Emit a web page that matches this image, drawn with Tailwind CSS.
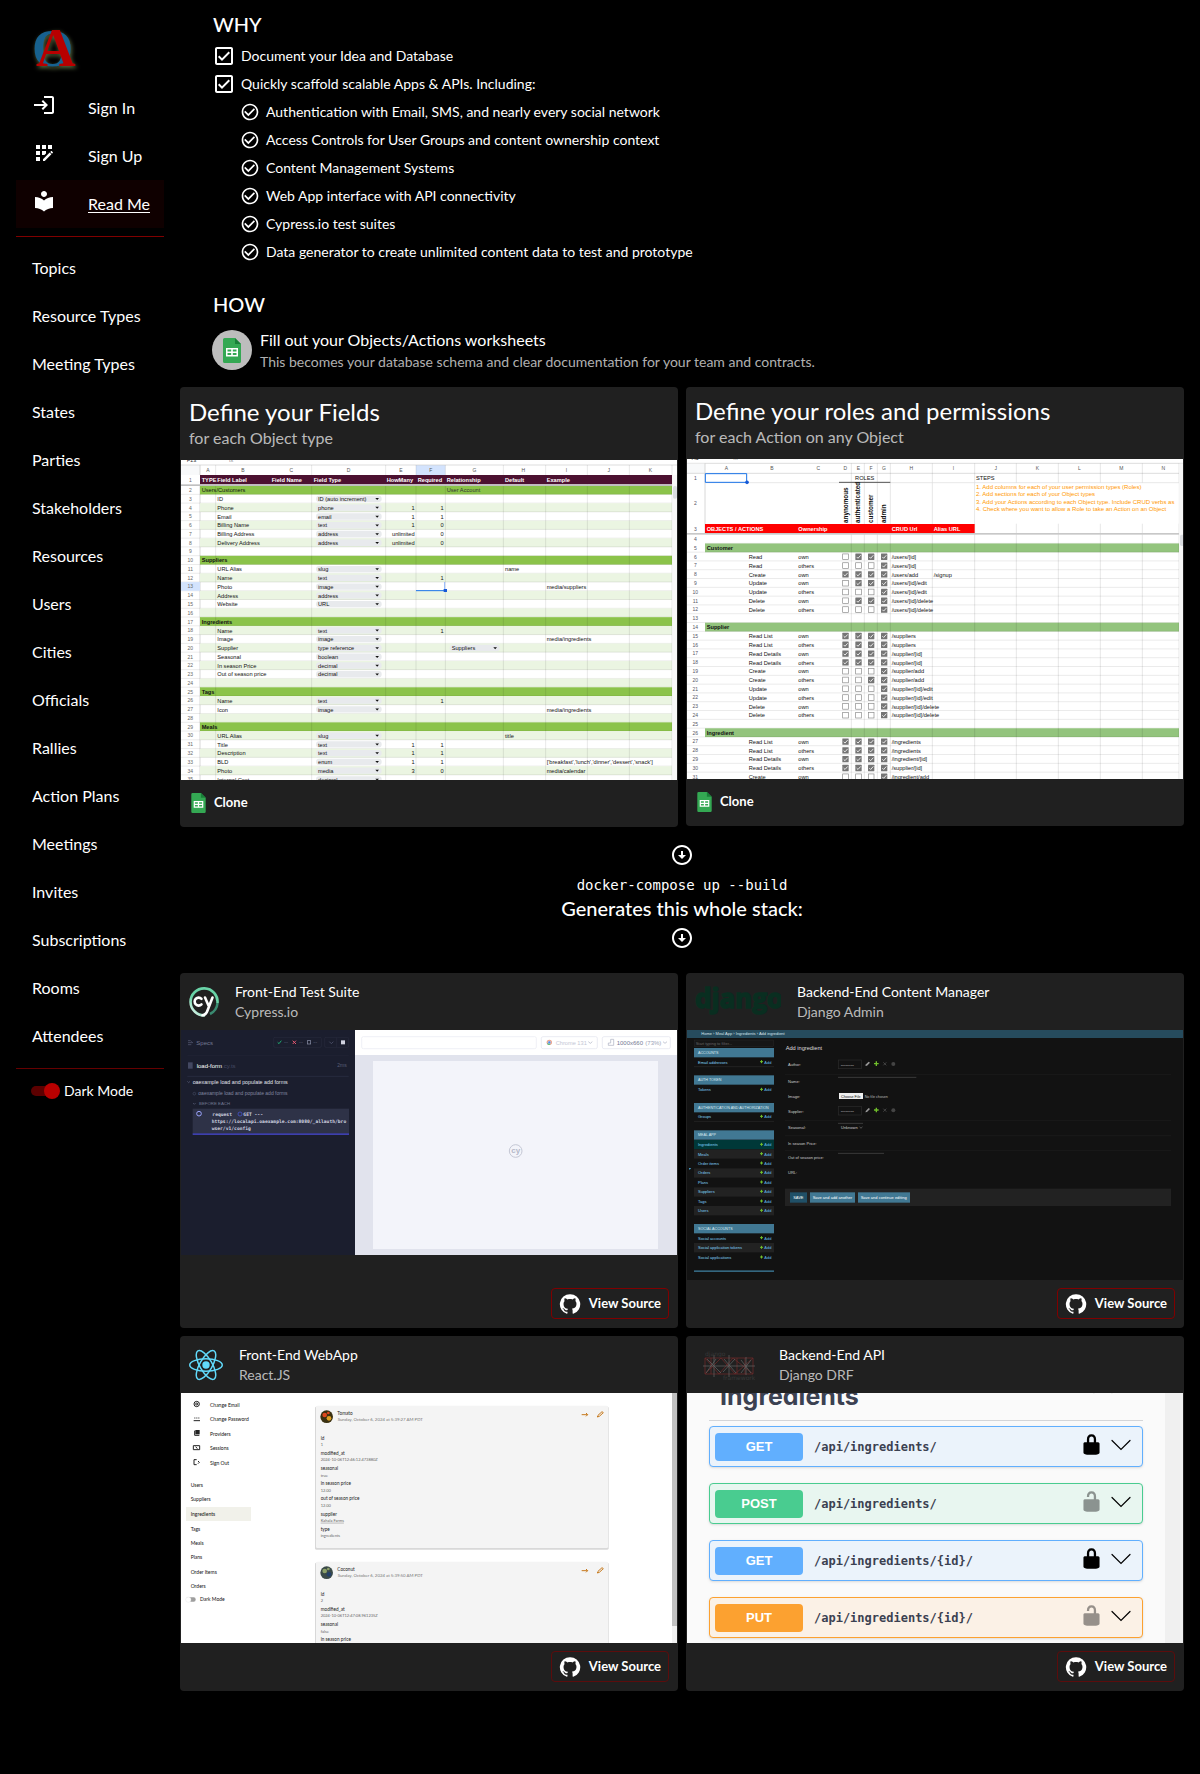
<!DOCTYPE html>
<html lang="en">
<head>
<meta charset="utf-8">
<meta name="viewport" content="width=device-width, initial-scale=1">
<title>Read Me</title>
<script src="https://cdn.jsdelivr.net/npm/@tailwindcss/browser@4"></script>
</head>
<body class="min-h-screen bg-black font-[Lato,sans-serif] text-white">
<svg class="hidden" aria-hidden="true">
  <symbol id="login" viewBox="0 0 24 24"><path d="M11 7 9.6 8.4l2.6 2.6H2v2h10.2l-2.6 2.6L11 17l5-5-5-5zm9 12h-8v2h8c1.1 0 2-.9 2-2V5c0-1.1-.9-2-2-2h-8v2h8v14z"/></symbol>
  <symbol id="register" viewBox="0 0 24 24"><path d="M10 4h4v4h-4zM4 16h4v4H4zM4 10h4v4H4zM4 4h4v4H4zM14 12.42V10h-4v4h2.42zM20.88 11.29l-1.17-1.17c-.16-.16-.42-.16-.58 0l-.88.88L20 12.75l.88-.88c.16-.16.16-.42 0-.58zM11 18.25V20h1.75l6.67-6.67-1.75-1.75zM16 4h4v4h-4z"/></symbol>
  <symbol id="library" viewBox="0 0 24 24"><path d="M12 11.55C9.64 9.35 6.48 8 3 8v11c3.48 0 6.64 1.35 9 3.55 2.36-2.19 5.52-3.55 9-3.55V8c-3.48 0-6.64 1.35-9 3.55zM12 8c1.66 0 3-1.34 3-3s-1.34-3-3-3-3 1.34-3 3 1.34 3 3 3z"/></symbol>
  <symbol id="box" viewBox="0 0 24 24"><path d="M19 3H5c-1.1 0-2 .9-2 2v14c0 1.1.9 2 2 2h14c1.1 0 2-.9 2-2V5c0-1.1-.9-2-2-2m0 16H5V5h14zM17.99 9l-1.41-1.42-6.59 6.59-2.58-2.57-1.42 1.41 4 3.99z"/></symbol>
  <symbol id="tick" viewBox="0 0 24 24"><path d="M16.59 7.58 10 14.17l-3.59-3.58L5 12l5 5 8-8zM12 2C6.48 2 2 6.48 2 12s4.48 10 10 10 10-4.48 10-10S17.52 2 12 2m0 18c-4.42 0-8-3.58-8-8s3.58-8 8-8 8 3.58 8 8-3.58 8-8 8"/></symbol>
  <symbol id="down" viewBox="0 0 24 24"><path d="M12 4c4.41 0 8 3.59 8 8s-3.59 8-8 8-8-3.59-8-8 3.59-8 8-8m0-2C6.48 2 2 6.48 2 12s4.48 10 10 10 10-4.48 10-10S17.52 2 12 2m1 10V8h-2v4H8l4 4 4-4z"/></symbol>
  <symbol id="github" viewBox="0 0 24 24"><path d="M12 1.27a11 11 0 00-3.48 21.46c.55.09.73-.28.73-.55v-1.84c-3.03.64-3.67-1.46-3.67-1.46-.55-1.29-1.28-1.65-1.28-1.65-.92-.65.1-.65.1-.65 1.1 0 1.73 1.1 1.73 1.1.92 1.65 2.57 1.2 3.21.92a2 2 0 01.64-1.47c-2.47-.27-5.04-1.19-5.04-5.5 0-1.1.46-2.1 1.2-2.84a3.76 3.76 0 010-2.93s.91-.28 3.11 1.1c1.8-.49 3.7-.49 5.5 0 2.1-1.38 3.02-1.1 3.02-1.1a3.76 3.76 0 01.1 2.93c.83.74 1.2 1.74 1.2 2.94 0 4.21-2.57 5.13-5.04 5.4.45.37.82.92.82 2.02v3.03c0 .27.1.64.73.55A11 11 0 0012 1.27"/></symbol>
  <symbol id="sheets" viewBox="0 0 18 25"><path fill="#34a853" d="M1.6 0H12l6 6v17.4a1.6 1.6 0 0 1-1.6 1.6H1.6A1.6 1.6 0 0 1 0 23.400V1.600A1.600 1.600 0 0 1 1.600 0z"/><path fill="#188038" d="M12 0l6 6h-6z"/><path fill="#fff" fill-rule="evenodd" d="M3 10h12v8.500H3zM4.500 11.500v2h3.700v-2zm5.300 0v2h3.700v-2zm-5.300 3.500v2h3.700v-2zm5.300 0v2h3.700v-2z"/></symbol>
  <symbol id="lock" viewBox="0 0 20 20"><path d="M15.800 8H14V5.600C14 2.703 12.665 1 10 1 7.334 1 6 2.703 6 5.600V8H4c-.553 0-1 .646-1 1.199V17c0 .549.428 1.139.951 1.307l1.197.387C5.672 18.861 6.550 19 7.100 19h5.800c.549 0 1.428-.139 1.951-.307l1.196-.387c.524-.167.953-.757.953-1.306V9.199C17 8.646 16.352 8 15.800 8zM12 8H8V5.199C8 3.754 8.797 3 10 3c1.203 0 2 .754 2 2.199V8z"/></symbol>
  <symbol id="unlock" viewBox="0 0 20 20"><path d="M15.800 8H14V5.600C14 2.703 12.665 1 10 1 7.334 1 6 2.703 6 5.600V6h2v-.801C8 3.754 8.797 3 10 3c1.203 0 2 .754 2 2.199V8H4c-.553 0-1 .646-1 1.199V17c0 .549.428 1.139.951 1.307l1.197.387C5.672 18.861 6.550 19 7.100 19h5.800c.549 0 1.428-.139 1.951-.307l1.196-.387c.524-.167.953-.757.953-1.306V9.199C17 8.646 16.352 8 15.800 8z"/></symbol>
  <symbol id="chevron" viewBox="0 0 20 20"><path fill="none" stroke="currentColor" stroke-width="1.200" stroke-linecap="round" d="M1 5.500l9 9 9-9"/></symbol>
</svg>

<div class="flex items-start px-4">
  <nav class="w-[148px] shrink-0 text-base leading-6" aria-label="Main">
    <a href="#" class="flex h-[84px] items-center pl-4 pt-3" aria-label="Home">
      <svg class="h-12 w-12 overflow-visible drop-shadow-[1px_2px_2px_#5a6a40]" viewBox="0 0 48 48" font-family="Liberation Serif, serif" font-weight="700" font-size="55"><text x="0" y="42" fill="#17618f" font-size="53">O</text><text x="4" y="42" fill="#b80000">A</text></svg>
    </a>
    <a href="#" class="flex h-12 items-center px-4"><svg class="mb-1.5 mr-8 size-6 shrink-0 fill-white"><use href="#login"/></svg>Sign In</a>
    <a href="#" class="flex h-12 items-center px-4"><svg class="mb-1.5 mr-8 size-6 shrink-0 fill-white"><use href="#register"/></svg>Sign Up</a>
    <a href="#" class="flex h-12 items-center bg-[#0f0000] pl-4 underline underline-offset-2"><svg class="mb-1.5 mr-8 size-6 shrink-0 fill-white"><use href="#library"/></svg><span class="whitespace-nowrap">Read Me</span></a>
    <hr class="my-2 border-[#800000]">
    <div id="links" class="-mt-px flex flex-col"></div>
    <hr class="my-2 border-[#650000]">
    <label class="flex h-7 items-center gap-1 pl-[15px] text-sm whitespace-nowrap">
      <span class="relative flex h-4 w-[29px] items-center">
        <input type="checkbox" role="switch" checked class="peer absolute inset-0 size-full cursor-pointer appearance-none">
        <span class="pointer-events-none h-2.5 w-7 rounded-full bg-[#5c0000]"></span>
        <span class="pointer-events-none absolute right-0 size-4 rounded-full bg-[#b80000]"></span>
      </span>Dark Mode
    </label>
  </nav>

  <main class="min-w-0 flex-1 pl-4">
    <section class="pl-8 pt-2">
      <h2 class="mb-0.5 pl-px text-xl leading-8 font-medium">WHY</h2>
      <ul id="why" class="text-sm"></ul>
      <h2 class="mt-[22px] pl-px text-xl leading-8 font-medium">HOW</h2>
      <div class="mt-2 flex items-center gap-2 pb-[15px]">
        <span class="grid size-10 shrink-0 place-items-center rounded-full bg-[#bdbdbd]"><svg class="h-[25px] w-[18px]"><use href="#sheets"/></svg></span>
        <div>
          <p class="text-base leading-6">Fill out your Objects/Actions worksheets</p>
          <p class="text-sm leading-5 text-white/70">This becomes your database schema and clear documentation for your team and contracts.</p>
        </div>
      </div>
    </section>

    <section class="grid grid-cols-2 items-start gap-2">
      <article class="rounded bg-[#202020] p-px">
        <header class="px-2 pt-2 pb-3"><h3 class="text-2xl leading-8">Define your Fields</h3><p class="text-base leading-5 text-white/70">for each Object type</p></header>
        <svg id="fields" class="block h-80 w-full bg-white" viewBox="3 30 1488 960" preserveAspectRatio="xMidYMin slice" role="img" aria-label="Fields worksheet" font-family="Liberation Sans, sans-serif" font-size="17"></svg>
        <footer class="flex h-[46px] items-center"><a href="#" class="flex items-center gap-2 pl-2.5 text-[13px] font-bold"><svg class="h-5 w-[15px]"><use href="#sheets"/></svg>Clone</a></footer>
      </article>
      <article class="rounded bg-[#202020] p-px">
        <header class="px-2 pt-[7px] pb-3"><h3 class="text-2xl leading-8">Define your roles and permissions</h3><p class="text-base leading-5 text-white/70">for each Action on any Object</p></header>
        <svg id="roles" class="block h-80 w-full bg-white" viewBox="21 237 1488 960" preserveAspectRatio="xMidYMin slice" role="img" aria-label="Roles and permissions worksheet" font-family="Liberation Sans, sans-serif" font-size="17"></svg>
        <footer class="flex h-[46px] items-center"><a href="#" class="flex items-center gap-2 pl-2.5 text-[13px] font-bold"><svg class="h-5 w-[15px]"><use href="#sheets"/></svg>Clone</a></footer>
      </article>
    </section>

    <section class="flex flex-col items-center pt-4 pb-[23px]">
      <svg class="size-6 fill-white"><use href="#down"/></svg>
      <code class="mt-2 font-['DejaVu_Sans_Mono',monospace] text-sm leading-5">docker-compose up --build</code>
      <h2 class="text-xl leading-[26px] font-medium">Generates this whole stack:</h2>
      <svg class="mt-[5px] size-6 fill-white"><use href="#down"/></svg>
    </section>

    <section class="grid grid-cols-2 gap-2">
      <article class="rounded bg-[#202020] p-px">
        <header class="flex h-14 items-center pl-2">
          <svg class="mr-4 size-[30px]" viewBox="0 0 30 30" aria-hidden="true"><defs><linearGradient id="cyg" x1="0" y1="1" x2="1" y2="0"><stop offset="0" stop-color="#fff"/><stop offset=".35" stop-color="#69d3a7"/><stop offset="1" stop-color="#69d3a7"/></linearGradient></defs><path fill="none" stroke="url(#cyg)" stroke-width="2.600" d="M16 28.300A13.500 13.500 0 1 1 28.500 16"/><path fill="none" stroke="#3a8a70" stroke-width="2.600" d="M28.500 16a13.500 13.500 0 0 1-7.500 11"/><path fill="none" stroke="#fff" stroke-width="2.600" stroke-linecap="round" d="M12.500 11.800a4 4 0 1 0 0 5.600M16 10.500l3.500 8M23.500 10.500l-5 13q-1.500 4.500-5 4.800"/></svg>
          <div class="text-sm leading-5"><h3>Front-End Test Suite</h3><p class="text-white/70">Cypress.io</p></div>
        </header>
        <svg id="cypress" class="block h-[250px] w-full" viewBox="3 60 1488 750" preserveAspectRatio="xMidYMin slice" role="img" aria-label="Cypress test runner" font-family="Liberation Sans, sans-serif" font-size="18"></svg>
        <footer class="flex h-[47px] items-center justify-end pr-2"><a href="#" class="flex h-[31px] items-center gap-2 rounded border border-[#800000] px-[7px] text-[13px] font-bold whitespace-nowrap"><svg class="size-[22px] fill-white"><use href="#github"/></svg>View Source</a></footer>
      </article>
      <article class="rounded bg-[#202020] p-px">
        <header class="flex h-14 items-center pl-2">
          <svg class="mr-4 h-8 w-[86px]" viewBox="0 0 86 32" role="img" aria-label="django"><text x="0" y="22" fill="#092e20" stroke="#092e20" stroke-width="1.500" font-family="Open Sans, sans-serif" font-weight="700" font-size="26">django</text></svg>
          <div class="text-sm leading-5"><h3>Backend-End Content Manager</h3><p class="text-white/70">Django Admin</p></div>
        </header>
        <svg id="admin" class="block h-[250px] w-full bg-[#121212]" viewBox="9 180 1488 750" preserveAspectRatio="xMidYMin slice" role="img" aria-label="Django admin form" font-family="Liberation Sans, sans-serif" font-size="15"></svg>
        <footer class="flex h-[47px] items-center justify-end pr-2"><a href="#" class="flex h-[31px] items-center gap-2 rounded border border-[#800000] px-[7px] text-[13px] font-bold whitespace-nowrap"><svg class="size-[22px] fill-white"><use href="#github"/></svg>View Source</a></footer>
      </article>
      <article class="rounded bg-[#202020] p-px">
        <header class="flex h-14 items-center pl-2">
          <svg class="mr-4 h-8 w-[34px]" viewBox="-11.500 -10.500 23 21" fill="none" stroke="#61dafb" aria-hidden="true"><circle r="2" fill="#61dafb"/><ellipse rx="11" ry="4.200"/><ellipse rx="11" ry="4.200" transform="rotate(60)"/><ellipse rx="11" ry="4.200" transform="rotate(120)"/></svg>
          <div class="text-sm leading-5"><h3>Front-End WebApp</h3><p class="text-white/70">React.JS</p></div>
        </header>
        <svg id="webapp" class="block h-[250px] w-full bg-white" viewBox="3 189 1488 750" preserveAspectRatio="xMidYMin slice" role="img" aria-label="React web app" font-family="Lato, sans-serif" font-size="17"></svg>
        <footer class="flex h-[47px] items-center justify-end pr-2"><a href="#" class="flex h-[31px] items-center gap-2 rounded border border-[#5c0c0c] px-[7px] text-[13px] font-bold whitespace-nowrap"><svg class="size-[22px] fill-white"><use href="#github"/></svg>View Source</a></footer>
      </article>
      <article class="rounded bg-[#202020] p-px">
        <header class="flex h-14 items-center pl-4">
          <svg class="mr-6 h-8 w-[52px]" viewBox="0 0 52 32" aria-hidden="true"><g fill="none" stroke="#6b2a2a" stroke-width=".8"><path d="M2 9h48v16H2zM2 9l14 16L30 9l20 16M2 25L18 9l14 16L50 9M8 9v16M34 9v16M42 9v16"/></g><g fill="none" stroke="#666" stroke-width=".7"><path d="M0 17h52M11 6v22M26 6v22M43 8v18M3 24L13 10M4 10l14 14M20 23l12-13M21 10l12 14M38 11l10 13M48 11L38 24"/></g><g fill="#383838" font-family="DejaVu Sans, sans-serif" font-size="6"><text x="2" y="7">django</text><text x="20" y="31">framework</text></g></svg>
          <div class="text-sm leading-5"><h3>Backend-End API</h3><p class="text-white/70">Django DRF</p></div>
        </header>
        <div class="flex h-[250px] overflow-hidden bg-[#fafafa] text-[#3b4151]">
          <div class="flex min-w-0 flex-1 flex-col px-[22px]">
            <div class="mb-[5px] flex h-7 shrink-0 items-end justify-between border-b border-[#3b4151]/20 pr-[30px] pb-2 pl-[11px]">
              <span class="font-[Inter,sans-serif] text-[25px] leading-8 font-bold">Ingredients</span>
              <svg class="mb-3.5 size-5 rotate-180 text-black"><use href="#chevron"/></svg>
            </div>
            <div id="api" class="flex flex-col gap-4"></div>
          </div>
          <div class="w-[18px] bg-[#f0f0f0]"></div>
        </div>
        <footer class="flex h-[47px] items-center justify-end pr-2"><a href="#" class="flex h-[31px] items-center gap-2 rounded border border-[#5c0c0c] px-[7px] text-[13px] font-bold whitespace-nowrap"><svg class="size-[22px] fill-white"><use href="#github"/></svg>View Source</a></footer>
      </article>
    </section>
  </main>
</div>

<script>
const $ = id => document.getElementById(id);
const esc = s => String(s).replace(/&/g, '&amp;').replace(/</g, '&lt;');
const R = (x, y, w, h, f, more = '') => `<rect x="${x}" y="${y}" width="${w}" height="${h}" fill="${f}" ${more}/>`;
const T = (x, y, s, f = '#111', more = '') => `<text x="${x}" y="${y}" fill="${f}" ${more}>${esc(s)}</text>`;
const L = (x1, y1, x2, y2, c, w = 2) => `<path d="M${x1} ${y1}L${x2} ${y2}" stroke="${c}" stroke-width="${w}" fill="none"/>`;
const B = 'font-weight="700"', MID = 'text-anchor="middle"', END = 'text-anchor="end"';

// Sidebar links
$('links').innerHTML = ['Topics','Resource Types','Meeting Types','States','Parties','Stakeholders','Resources','Users','Cities','Officials','Rallies','Action Plans','Meetings','Invites','Subscriptions','Rooms','Attendees']
  .map(t => `<a href="#" class="flex h-12 items-center px-4 whitespace-nowrap">${t}</a>`).join('');

// Feature list
const row = (icon, cls, t) => `<li class="flex h-7 items-center ${cls}"><svg class="${icon === 'box' ? 'size-6' : 'size-5'} shrink-0 fill-white"><use href="#${icon}"/></svg>${esc(t)}</li>`;
$('why').innerHTML = ['Document your Idea and Database', 'Quickly scaffold scalable Apps & APIs. Including:'].map(t => row('box', 'gap-[5px]', t)).join('') +
  ['Authentication with Email, SMS, and nearly every social network','Access Controls for User Groups and content ownership context','Content Management Systems','Web App interface with API connectivity','Cypress.io test suites','Data generator to create unlimited content data to test and prototype'].map(t => row('tick', 'gap-1.5 pl-7', t)).join('');

// API operations
const tones = {
  GET: ['border-[#61affe] bg-[#ebf3fb]', 'bg-[#61affe]'],
  POST: ['border-[#49cc90] bg-[#e8f6f0]', 'bg-[#49cc90]'],
  PUT: ['border-[#fca130] bg-[#fbf1e6]', 'bg-[#fca130]'],
};
$('api').innerHTML = [['GET','/api/ingredients/',1],['POST','/api/ingredients/',0],['GET','/api/ingredients/{id}/',1],['PUT','/api/ingredients/{id}/',0]].map(([m, p, locked]) =>
  `<div class="flex h-[41px] items-center rounded border px-[5px] shadow-sm ${tones[m][0]}"><span class="grid h-7 w-[88px] place-items-center rounded-sm font-['Liberation_Sans',sans-serif] text-[13px] font-bold text-white ${tones[m][1]}">${m}</span><span class="ml-[11px] flex-1 font-['DejaVu_Sans_Mono',monospace] text-xs font-bold">${p}</span><svg class="mr-2 mb-1 size-[23px] ${locked ? 'fill-black' : 'fill-black/40'}"><use href="#${locked ? 'lock' : 'unlock'}"/></svg><svg class="mr-1.5 mb-1 size-5 text-black"><use href="#chevron"/></svg></div>`).join('');

// Fields worksheet
(() => {
  let s = '';
  const top = n => 107 + (n - 2) * 26.3;
  const heads = {2:'Users/Customers',10:'Suppliers',17:'Ingredients',25:'Tags',29:'Meals'};
  const cols = [107,395,617,708,796,970,1097,1222,1348,1476];
  s += T(20, 36, 'F13', '#333') + T(147, 37, 'fx', '#888');
  s += R(3, 45, 57, 30, '#f8f9fa') + R(708, 45, 88, 30, '#d3e3fd') + L(3, 45, 1491, 45, '#ccc') + L(60, 45, 60, 990, '#c4c4c4');
  [[84,'A'],[189,'B'],[334,'C'],[506,'D'],[663,'E'],[752,'F'],[883,'G'],[1030,'H'],[1159,'I'],[1286,'J'],[1411,'K']].forEach(([x, t]) => s += T(x, 66, t, '#555', MID + ' font-size="15"'));
  for (let n = 2; n <= 35; n++) {
    const y = top(n);
    if (heads[n]) s += R(60, y, 1416, 26.3, '#8bc34a') + T(65, y + 20, heads[n], '#111', n === 2 ? '' : B);
    else if (n % 2 === 0) s += R(60, y, 1416, 26.3, '#ebf5e2');
    s += L(3, y + 26, 1476, y + 26, '#000" stroke-opacity=".13', 2);
    s += n === 13 ? R(3, y, 57, 26, '#d3e3fd') : '';
    s += T(31, y + 19, n, '#666', MID + ' font-size="15"');
  }
  cols.forEach(x => s += L(x, 45, x, 990, '#000" stroke-opacity=".14', 2));
  s += R(3, 75, 57, 28, '#fff') + T(31, 96, 1, '#666', MID + ' font-size="15"') + R(60, 75, 1416, 28, '#4c1130') + R(3, 103, 1473, 5, '#c0c0c0');
  [[65,'TYPE'],[112,'Field Label'],[275,'Field Name'],[401,'Field Type'],[620,'HowMany'],[713,'Required'],[800,'Relationship'],[975,'Default'],[1100,'Example']].forEach(([x, t]) => s += T(x, 96, t, '#fff', B));
  s += T(800, 127, 'User Account', '#333');
  const rows = {
    3:['ID','ID (auto increment)'],4:['Phone','phone',1,1],5:['Email','email',1,1],6:['Billing Name','text',1,0],7:['Billing Address','address','unlimited',0],8:['Delivery Address','address','unlimited',0],
    11:['URL Alias','slug','','','name'],12:['Name','text','',1],13:['Photo','image','','','','media/suppliers'],14:['Address','address'],15:['Website','URL'],
    18:['Name','text','',1],19:['Image','image','','','','media/ingredients'],20:['Supplier','type reference'],21:['Seasonal','boolean'],22:['In season Price','decimal'],23:['Out of season price','decimal'],
    26:['Name','text','',1],27:['Icon','image','','','','media/ingredients'],
    30:['URL Alias','slug','','','title'],31:['Title','text',1,1],32:['Description','text',1,1],33:['BLD','enum',1,1,'',"['breakfast','lunch','dinner','dessert','snack']"],34:['Photo','media',3,0,'','media/calendar'],35:['Internal Cost','decimal']
  };
  const chip = (x, y, w, t) => R(x, y + 4, w, 19, '#e8eaed', 'rx="9"') + T(x + 6, y + 20, t) + `<path d="M${x + w - 19} ${y + 11}h11l-5.500 6z" fill="#111"/>`;
  for (const n in rows) {
    const y = top(+n), [a, b, c = '', d = '', e = '', f = ''] = rows[n];
    s += T(112, y + 20, a) + chip(408, y, 197, b) + T(704, y + 20, c, '#111', END) + T(791, y + 20, d, '#111', END) + T(975, y + 20, e) + T(1100, y + 20, f);
  }
  s += chip(809, top(20), 150, 'Suppliers');
  s += L(708, 422, 796, 422, '#1a73e8', 3) + L(794, 396, 794, 422, '#8ab4f8', 3) + R(791, 417, 10, 9, '#1558d6');
  s += R(1478, 75, 13, 915, '#f8f8f8') + R(1479, 108, 12, 38, '#dadce0', 'rx="5"');
  $('fields').innerHTML = s;
})();

// Roles and permissions worksheet
(() => {
  let s = '';
  const top = n => 464 + (n - 4) * 26.4;
  const heads = {5:'Customer',14:'Supplier',26:'Ingredient'};
  s += T(35, 241, 'A1', '#333') + T(160, 241, 'fx', '#888') + L(21, 250, 1509, 250, '#ccc') + R(21, 251, 54, 29, '#f8f9fa') + L(75, 250, 75, 459, '#c4c4c4') + L(21, 280, 1497, 280, '#ccc');
  [[139,'A'],[276,'B'],[415,'C'],[496,'D'],[535,'E'],[573,'F'],[612,'G'],[694,'H'],[820,'I'],[947,'J'],[1072,'K'],[1198,'L'],[1324,'M'],[1450,'N']].forEach(([x, t]) => s += T(x, 270, t, '#555', MID + ' font-size="15"'));
  for (let n = 4; n <= 31; n++) {
    const y = top(n);
    if (heads[n]) s += R(75, y, 1422, 26.4, '#93c47d') + T(80, y + 20, heads[n], '#111', B);
    s += L(n === 4 ? 75 : 21, y + 26, 1497, y + 26, '#000" stroke-opacity=".13') + T(46, y + 19, n, '#556', MID + ' font-size="15"');
  }
  [514,553,592,631,757,884,1009,1135,1261,1387,1497].forEach(x => s += L(x, 250, x, 1197, '#000" stroke-opacity=".15'));
  s += R(886, 309, 610, 122, '#fff') + R(75, 432, 809, 27, '#f00') + R(21, 459, 1476, 5, '#c8c8c8');
  s += L(75, 308, 1497, 308, '#ddd') + L(477, 307, 631, 307, '#555', 3);
  [[46,300,1],[46,375,2],[46,452,3]].forEach(([x, y, t]) => s += T(x, y, t, '#556', MID + ' font-size="15"'));
  s += T(554, 301, 'ROLES', '#111', MID) + T(888, 301, 'STEPS');
  s += `<path d="M76 281H200V307H76z" fill="none" stroke="#1a73e8" stroke-width="3"/><circle cx="201" cy="307" r="5.500" fill="#1558d6"/>`;
  [[503,'anynomous'],[541,'authenticated'],[580,'customer'],[618,'admin']].forEach(([x, t]) => s += `<text transform="translate(${x} 429) rotate(-90)" font-weight="700" font-size="19" fill="#111">${t}</text>`);
  ['1.  Add columns for each of your user permission types (Roles)','2.  Add sections for each of your Object types','3.  Add your Actions according to each Object type. Include CRUD verbs as','4.  Check where you want to allow a Role to take an Action on an Object'].forEach((t, i) => s += T(888, 327 + i * 22.4, t, '#ff9900', 'font-size="18"'));
  [[80,'OBJECTS / ACTIONS'],[355,'Ownership'],[635,'CRUD Url'],[761,'Alias URL']].forEach(([x, t]) => s += T(x, 452, t, '#fff', B));
  const rows = {
    6:['Read','own','0111','/users/[id]'],7:['Read','others','0001','/users/[id]'],8:['Create','own','1111','/users/add'],9:['Update','own','0111','/users/[id]/edit'],10:['Update','others','0001','/users/[id]/edit'],11:['Delete','own','0111','/users/[id]/delete'],12:['Delete','others','0001','/users/[id]/delete'],
    15:['Read List','own','1111','/suppliers'],16:['Read List','others','1111','/suppliers'],17:['Read Details','own','1111','/supplier/[id]'],18:['Read Details','others','1111','/supplier/[id]'],19:['Create','own','0001','/supplier/add'],20:['Create','others','0011','/supplier/add'],21:['Update','own','0001','/supplier/[id]/edit'],22:['Update','others','0001','/supplier/[id]/edit'],23:['Delete','own','0001','/supplier/[id]/delete'],24:['Delete','others','0001','/supplier/[id]/delete'],
    27:['Read List','own','1111','/ingredients'],28:['Read List','others','1111','/ingredients'],29:['Read Details','own','1111','/ingredient/[id]'],30:['Read Details','others','1111','/supplier/[id]'],31:['Create','own','0001','/ingredient/add']
  };
  for (const n in rows) {
    const y = top(+n), [a, o, c, u] = rows[n];
    s += T(206, y + 20, a) + T(355, y + 20, o) + T(635, y + 20, u);
    [...c].forEach((v, i) => {
      const x = [487, 526, 564, 603][i];
      s += v === '1' ? R(x, y + 4, 19, 19, '#757575', 'rx="1"') + `<path d="M${x + 4} ${y + 14}l4 4 8-9" stroke="#fff" stroke-width="2.500" fill="none"/>` : R(x + 1, y + 5, 17, 17, '#fff', 'stroke="#888" stroke-width="2"');
    });
  }
  s += T(761, top(8) + 20, '/signup') + R(1498, 251, 12, 946, '#f8f8f8') + R(1500, 464, 12, 34, '#dadce0', 'rx="5"');
  $('roles').innerHTML = s;
})();

// Cypress runner
(() => {
  let s = R(3, 60, 522, 675, '#1b1e2e') + R(525, 60, 966, 75, '#fff') + R(525, 135, 966, 600, '#e1e3ed') + R(579, 153, 855, 564, '#f3f4fa');
  s += R(545, 80, 524, 36, '#fff', 'rx="5" stroke="#e9eaf2" stroke-width="2"') + R(1084, 80, 168, 36, '#fff', 'rx="5" stroke="#e1e3ed" stroke-width="2"') + R(1267, 80, 204, 36, '#fff', 'rx="5" stroke="#e1e3ed" stroke-width="2"');
  s += `<circle cx="1108" cy="97" r="8" fill="#e8a08a"/><path d="M1108 97l-7 4a8 8 0 0 0 10 3z" fill="#5dbb7a"/><circle cx="1108" cy="97" r="4" fill="#4a8af0" stroke="#fff"/>`;
  s += T(1127, 104, 'Chrome 131', '#c3c6d4', 'font-size="17"') + T(1310, 104, '1000x660', '#747994') + T(1396, 104, '(73%)', '#9a9fb5');
  s += `<g fill="none" stroke="#a9adc0" stroke-width="2"><path d="M1225 95l6 5 6-5M1449 95l6 5 6-5M1292 88h9v18h-16v-7h7z"/></g>`;
  s += `<circle cx="1007" cy="423" r="19" fill="none" stroke="#c4c7d4" stroke-width="3"/>` + T(1007, 430, 'cy', '#b4b8c8', MID + ' font-size="24" font-weight="700"');
  s += `<g fill="none" stroke="#5a5f7a" stroke-width="2"><path d="M24 92h8M24 98h14l-4-4M24 104h10M448 95l6 6 6-6M22 214l4 4 4-4M39 279l4 4 4-4"/></g>` + T(49, 104, 'Specs', '#747994');
  s += R(281, 82, 143, 30, 'none', 'rx="4" stroke="#272a3d" stroke-width="2"') + R(434, 82, 72, 30, 'none', 'rx="4" stroke="#272a3d" stroke-width="2"') + L(470, 82, 470, 112, '#272a3d');
  s += `<path d="M293 97l4 4 7-9" stroke="#1fa971" stroke-width="3" fill="none"/><path d="M338 92l10 10m0-10l-10 10" stroke="#e45770" stroke-width="3"/><rect x="382" y="92" width="10" height="10" fill="none" stroke="#9095ad" stroke-width="2"/>` + R(483, 91, 12, 12, '#d0d2e0');
  [312, 357, 400].forEach(x => s += T(x, 102, '--', '#5a5f7a'));
  s += R(24, 157, 14, 19, '#434861') + T(50, 173, 'load-form', '#fff') + T(126, 173, '.cy.ts', '#434861') + T(472, 172, '2ms', '#5a5f7a', 'font-size="15"') + L(22, 199, 506, 199, '#2e3247') + L(22, 136, 506, 136, '#222538');
  s += T(38, 222, 'oaexample load and populate add forms', '#e1e3ed', 'font-size="16"') + `<circle cx="43" cy="251" r="4" fill="none" stroke="#434861" stroke-width="2"/>` + T(55, 255, 'oaexample load and populate add forms', '#8287a0', 'font-size="15"') + T(57, 286, 'BEFORE EACH', '#747994', 'font-size="13"');
  s += R(38, 296, 469, 76, '#2e3247') + R(38, 370, 469, 5, '#3d3fae') + `<circle cx="57" cy="311" r="7" fill="none" stroke="#9aa2fc" stroke-width="3"/>`;
  s += `<g font-family="DejaVu Sans Mono, monospace" font-size="14" fill="#d0d2e0" font-weight="700"><text x="97" y="317">request</text><text x="190" y="317">GET ---</text><text x="95" y="339">https://localapi.oaexample.com:8080/_allauth/bro</text><text x="95" y="360">wser/v1/config</text></g><circle cx="180" cy="312" r="6" fill="none" stroke="#4956e3" stroke-width="2"/>`;
  $('cypress').innerHTML = s;
})();

// Django admin
(() => {
  let s = R(9, 180, 1488, 24, '#264b5d') + T(52, 194, 'Home › Meal App › Ingredients › Add ingredient', '#d5e3ea', 'font-size="12"');
  s += R(31, 210, 238, 20, '#161616', 'stroke="#333"') + T(35, 225, 'Start typing to filter...', '#666', 'font-size="12"');
  [[234,'ACCOUNTS'],[316,'AUTH TOKEN'],[399,'AUTHENTICATION AND AUTHORIZATION'],[481,'MEAL APP'],[762,'SOCIAL ACCOUNTS']].forEach(([y, t]) => s += R(30, y, 240, 28, '#417893') + T(42, y + 18, t, '#dcebf2', 'font-size="11"'));
  s += R(30, 510, 240, 28, '#003838');
  [538, 595, 652, 708, 819].forEach(y => s += R(30, y, 240, 28, '#222'));
  [[276,'Email addresses'],[359,'Tokens'],[440,'Groups'],[524,'Ingredients'],[552,'Meals'],[580,'Order items'],[608,'Orders'],[637,'Plans'],[665,'Suppliers'],[694,'Tags'],[722,'Users'],[804,'Social accounts'],[833,'Social application tokens'],[862,'Social applications']].forEach(([y, t]) => s += T(42, y + 5, t, '#81d4fa', 'font-size="12"') + T(241, y + 5, 'Add', '#62b8ea', 'font-size="12"') + `<path d="M228 ${y - 1}h9m-4.500-4.500v9" stroke="#70bf2b" stroke-width="3"/>`);
  [290, 454].forEach(y => s += L(30, y, 270, y, '#2a2a2a'));
  s += R(30, 901, 240, 5, '#34667f') + `<path d="M15 594l6 0-4 6z" fill="#4fb4e8"/>` + T(305, 241, 'Add ingredient', '#ddd', 'font-size="17"');
  [[283,'Author:'],[335,'Name:'],[380,'Image:'],[424,'Supplier:'],[473,'Seasonal:'],[519,'In season Price:'],[563,'Out of season price:'],[607,'URL:']].forEach(([y, t]) => s += T(312, y + 5, t, '#ccc', 'font-size="12"'));
  [313, 451, 497, 541].forEach(y => s += L(303, y, 1461, y, '#1e1e1e'));
  [270, 409].forEach(y => s += R(463, y, 69, 26, '#121212', 'stroke="#2c2c2c" stroke-width="2"') + T(470, y + 20, '--------', '#ccc') + `<path d="M544 ${y + 18}l2-5 8-8 4 3-9 9z" fill="#999"/><path d="M570 ${y + 11}h14m-7-7v14" stroke="#70bf2b" stroke-width="4"/><path d="M598 ${y + 7}l9 9m0-9l-9 9" stroke="#444" stroke-width="3"/><circle cx="628" cy="${y + 12}" r="6" fill="#444"/>`);
  s += L(462, 322, 697, 322, '#3a3a3a', 3) + L(462, 460, 537, 460, '#3a3a3a', 3) + L(462, 550, 600, 550, '#3a3a3a', 3) + R(465, 369, 72, 18, '#efefef') + T(471, 383, 'Choose File', '#111', 'font-size="11"') + T(542, 383, 'No file chosen', '#bbb', 'font-size="11"') + T(471, 478, 'Unknown', '#ccc', 'font-size="12"') + `<path d="M527 470l4 5 4-5" stroke="#ccc" fill="none"/>`;
  s += R(303, 656, 1158, 52, '#222') + R(318, 667, 51, 31, '#205067') + R(378, 667, 135, 31, '#417893') + R(522, 667, 156, 31, '#417893');
  [[343,'SAVE'],[445,'Save and add another'],[599,'Save and continue editing']].forEach(([x, t]) => s += T(x, 687, t, '#fff', MID + ' font-size="12"'));
  $('admin').innerHTML = s;
})();

// React app
(() => {
  let s = R(1476, 189, 15, 750, '#f1f1f1') + R(1476, 189, 15, 699, '#c1c1c1') + R(18, 531, 195, 42, '#f1f1ea');
  [[224,'Change Email'],[268,'Change Password'],[312,'Providers'],[355,'Sessions'],[398,'Sign Out']].forEach(([y, t]) => s += T(90, y + 6, t, '#111', 'font-size="15"'));
  s += `<g fill="none" stroke="#222" stroke-width="3"><circle cx="50" cy="222" r="8"/><circle cx="50" cy="222" r="3"/><path d="M41 272h19M43 264h3m3 0h3m3 0h3M44 302v14h14M40 347h19v12H40zM47 350l5 6M50 389h-8v15h8m4-11l4 4-4 4"/></g>` + R(46, 300, 13, 13, '#222');
  [[464,'Users'],[508,'Suppliers'],[552,'Ingredients'],[596,'Tags'],[639,'Meals'],[682,'Plans'],[726,'Order Items'],[769,'Orders']].forEach(([y, t]) => s += T(32, y + 6, t, '#111', 'font-size="15"'));
  s += R(19, 802, 28, 13, '#9e9e9e', 'rx="6"') + `<circle cx="25" cy="809" r="8" fill="#fff" stroke="#ddd"/>` + T(60, 814, 'Dark Mode', '#111', 'font-size="15"');
  const card = (y, h, name, id, when, mod, seas, c) => {
    s += R(405, y + 3, 881, h + 2, '#d8d8d8', 'rx="4"') + R(408, y, 876, h, '#f4f4f4', 'rx="4"');
    s += `<circle cx="440" cy="${y + 33}" r="19" fill="${c[0]}"/><circle cx="434" cy="${y + 28}" r="7" fill="${c[1]}"/><circle cx="447" cy="${y + 38}" r="7" fill="${c[2]}"/><circle cx="445" cy="${y + 22}" r="4" fill="${c[1]}"/>`;
    s += T(472, y + 29, name, '#222', 'font-size="14"') + T(473, y + 46, when, '#777', 'font-size="13"');
    s += `<path d="M1205 ${y + 27}h18m-5-5l5 5-5 5M1252 ${y + 34}l2-5 12-11 4 3-12 11z" fill="none" stroke="#c77a1e" stroke-width="3"/>`;
    [['id', id],['modified_at', mod],['seasonal', seas],['in season price','12.00'],['out of season price','12.00'],['supplier','Kahala Farms'],['type','ingredients']].forEach(([k, v], i) => {
      const b = y + 103 + i * 45.3; s += T(422, b, k, '#222', 'font-size="14"') + T(422, b + 19, v, '#666', 'font-size="12"' + (i === 5 ? ' text-decoration="underline"' : ''));
    });
  };
  card(227, 427, 'Tomato', 1, 'Sunday, October 6, 2024 at 5:39:27 AM PDT', '2024-10-06T12:46:12.473880Z', 'true', ['#3a3010','#e0481c','#e0a020']);
  card(695, 300, 'Coconut', 2, 'Sunday, October 6, 2024 at 5:39:50 AM PDT', '2024-10-06T12:47:08.961235Z', 'false', ['#3a4a48','#8ca068','#24406a']);
  $('webapp').innerHTML = s;
})();
</script>
</body>
</html>
